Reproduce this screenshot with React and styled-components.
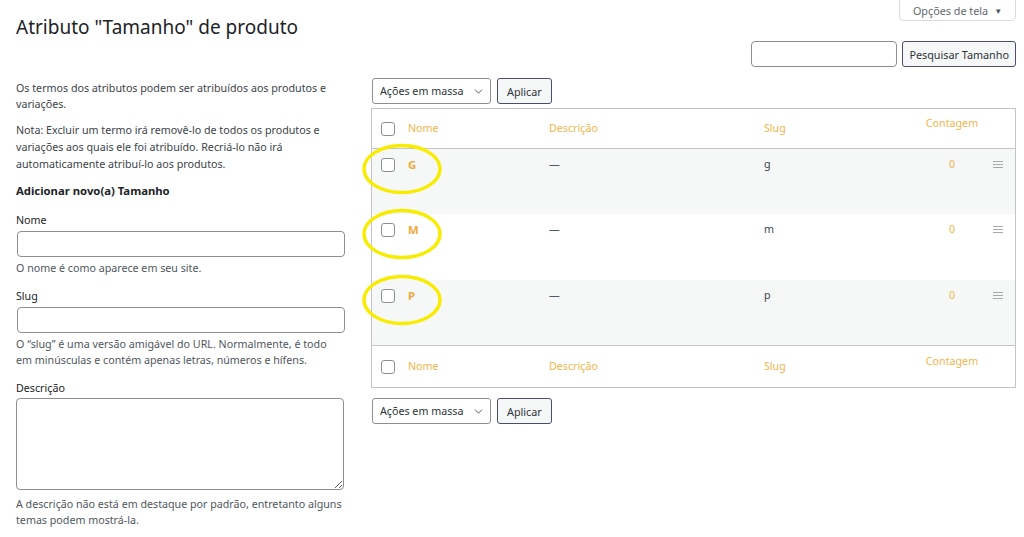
import React from "react";
import styled, { createGlobalStyle } from "styled-components";
import { ChevronDown } from "lucide-react";

const Global = createGlobalStyle`
  html, body { margin: 0; padding: 0; background: #fff; }
  body {
    font-family: "Noto Sans", "Open Sans", sans-serif;
    font-size: 10.7px;
    color: #3c434a;
  }
  * { box-sizing: border-box; }
`;

const Page = styled.div`
  padding: 0 8px 0 16px;
`;

const TopBar = styled.div`
  display: flex;
  justify-content: space-between;
  align-items: flex-start;
`;

const Title = styled.h1`
  margin: 14px 0 0;
  font-size: 19px;
  font-weight: 400;
  line-height: 26px;
  color: #1d2327;
`;

const RightStack = styled.div`
  display: flex;
  flex-direction: column;
  align-items: flex-end;
`;

const ScreenTab = styled.button`
  height: 22px;
  width: 117px;
  margin-top: -1px;
  border: 1px solid #dcdcde;
  border-radius: 0 0 4px 4px;
  background: #fff;
  color: #646970;
  font: inherit;
  font-size: 10.8px;
  display: flex;
  align-items: center;
  justify-content: center;
  gap: 6px;
  padding: 0;
  span { font-size: 8px; color: #50575e; }
`;

const SearchRow = styled.div`
  display: flex;
  gap: 5px;
  margin-top: 20px;
`;

const SearchInput = styled.input`
  width: 146px;
  height: 26px;
  border: 1px solid #8c8f94;
  border-radius: 4px;
  background: #fff;
`;

const DarkButton = styled.button`
  height: 26px;
  padding: 0 ${(p) => (p.$wide ? "6px" : "9px")};
  border: 1px solid #4e4c6a;
  border-radius: 3px;
  background: #f6f7f7;
  color: #2c3338;
  font: inherit;
  font-size: 10.8px;
`;

const Columns = styled.div`
  display: flex;
  gap: 27px;
  margin-top: 11px;
  align-items: flex-start;
`;

const LeftCol = styled.div`
  width: 328px;
  flex: none;
  padding-top: 2px;
`;

const Para = styled.p`
  margin: 0 0 ${(p) => p.$mb || 0}px;
  line-height: ${(p) => p.$lh || 17}px;
`;

const FormTitle = styled.h2`
  margin: 9px 0 0;
  font-size: 11.3px;
  font-weight: 700;
  line-height: 17px;
  color: #1d2327;
`;

const Field = styled.div`
  margin-top: ${(p) => p.$mt}px;
`;

const Label = styled.label`
  display: block;
  line-height: 17px;
  color: #1d2327;
  margin-bottom: 2px;
`;

const TextInput = styled.input`
  display: block;
  width: 328px;
  height: 26px;
  margin-left: 1px;
  border: 1px solid #8c8f94;
  border-radius: 4px;
  background: #fff;
`;

const TextArea = styled.textarea`
  display: block;
  width: 328px;
  height: 92px;
  margin-top: -1px;
  border: 1px solid #8c8f94;
  border-radius: 4px;
  background: #fff;
`;

const Help = styled.p`
  margin: ${(p) => p.$mt || 3}px 0 0;
  line-height: 16.5px;
  color: #50575e;
`;

const RightCol = styled.div`
  flex: 1;
`;

const Toolbar = styled.div`
  display: flex;
  gap: 6px;
  margin-left: 1px;
`;

const BulkSelect = styled.div`
  width: 119px;
  height: 26px;
  border: 1px solid #8c8f94;
  border-radius: 3px;
  background: #fff;
  display: flex;
  align-items: center;
  justify-content: space-between;
  padding: 0 5px 0 7px;
  color: #2c3338;
`;

const Table = styled.div`
  margin: 4px 0 10px;
  border: 1px solid #c3c4c7;
`;

const Row = styled.div`
  position: relative;
  display: grid;
  grid-template-columns: 36px 141px 215px 1fr 82px 22px;
  align-items: ${(p) => (p.$head ? "center" : "start")};
  height: ${(p) => p.$h}px;
  padding-top: ${(p) => (p.$head ? 0 : 7)}px;
  background: ${(p) => (p.$alt ? "#f6f7f7" : "#fff")};
  border-top: ${(p) => (p.$footer ? "1px solid #c3c4c7" : "none")};
  border-bottom: ${(p) => (p.$headerTop ? "1px solid #c3c4c7" : "none")};
`;

const CheckCell = styled.div`
  padding-left: 9px;
  display: flex;
  align-items: center;
  height: 17px;
`;

const Check = styled.span`
  display: block;
  width: 14px;
  height: 14px;
  border: 1px solid #8c8f94;
  border-radius: 3px;
  background: #fff;
`;

const HeadCell = styled.div`
  color: #f4b54c;
  line-height: 17px;
  text-align: ${(p) => (p.$center ? "center" : "left")};
  margin-top: ${(p) => (p.$raise ? -10 : 0)}px;
`;

const NameCell = styled.div`
  color: #f0a93a;
  font-weight: 700;
  font-size: 11.3px;
  line-height: 17px;
`;

const Cell = styled.div`
  line-height: 17px;
  color: ${(p) => p.$color || "#3c434a"};
  text-align: ${(p) => (p.$center ? "center" : "left")};
`;

const Handle = styled.div`
  height: 17px;
  display: flex;
  align-items: center;
`;

const Marker = styled.svg`
  position: absolute;
  left: -11px;
  top: -6px;
  pointer-events: none;
`;

const terms = [
  { name: "G", slug: "g" },
  { name: "M", slug: "m" },
  { name: "P", slug: "p" },
];

function Header({ footer }) {
  return (
    <Row $head $h={footer ? 42 : 40} $footer={footer} $headerTop={!footer}>
      <CheckCell><Check /></CheckCell>
      <HeadCell>Nome</HeadCell>
      <HeadCell>Descrição</HeadCell>
      <HeadCell>Slug</HeadCell>
      <HeadCell $center $raise>Contagem</HeadCell>
      <div />
    </Row>
  );
}

function Actions() {
  return (
    <Toolbar>
      <BulkSelect>
        Ações em massa
        <ChevronDown size={13} strokeWidth={1.6} color="#3c434a" />
      </BulkSelect>
      <DarkButton>Aplicar</DarkButton>
    </Toolbar>
  );
}

export default function App() {
  return (
    <Page>
      <Global />
      <TopBar>
        <Title>Atributo "Tamanho" de produto</Title>
        <RightStack>
          <ScreenTab>
            Opções de tela <span>▼</span>
          </ScreenTab>
          <SearchRow>
            <SearchInput />
            <DarkButton $wide>Pesquisar Tamanho</DarkButton>
          </SearchRow>
        </RightStack>
      </TopBar>

      <Columns>
        <LeftCol>
          <Para $lh={16} $mb={10}>
            Os termos dos atributos podem ser atribuídos aos produtos e variações.
          </Para>
          <Para>
            Nota: Excluir um termo irá removê-lo de todos os produtos e variações
            aos quais ele foi atribuído. Recriá-lo não irá automaticamente
            atribuí-lo aos produtos.
          </Para>
          <FormTitle>Adicionar novo(a) Tamanho</FormTitle>
          <Field $mt={13}>
            <Label>Nome</Label>
            <TextInput />
            <Help>O nome é como aparece em seu site.</Help>
          </Field>
          <Field $mt={11}>
            <Label>Slug</Label>
            <TextInput />
            <Help>
              O “slug” é uma versão amigável do URL. Normalmente, é todo em
              minúsculas e contém apenas letras, números e hífens.
            </Help>
          </Field>
          <Field $mt={11}>
            <Label>Descrição</Label>
            <TextArea />
            <Help $mt={6}>
              A descrição não está em destaque por padrão, entretanto alguns
              temas podem mostrá-la.
            </Help>
          </Field>
        </LeftCol>

        <RightCol>
          <Actions />
          <Table>
            <Header />
            {terms.map((t, i) => (
              <Row key={t.name} $h={i === 1 ? 66 : 65} $alt={i !== 1}>
                <CheckCell><Check /></CheckCell>
                <NameCell>{t.name}</NameCell>
                <Cell $color="#50575e">—</Cell>
                <Cell>{t.slug}</Cell>
                <Cell $center $color="#f4b54c">0</Cell>
                <Handle>
                  <svg width="10" height="7" viewBox="0 0 10 7">
                    <path d="M0 .5h10M0 3.5h10M0 6.5h10" stroke="#a7aaad" strokeWidth="1" />
                  </svg>
                </Handle>
                <Marker width="82" height="52" viewBox="0 0 82 52">
                  <ellipse cx="41" cy="26" rx="38" ry="23.5" fill="none" stroke="#f8ec00" strokeWidth="3.5" />
                </Marker>
              </Row>
            ))}
            <Header footer />
          </Table>
          <Actions />
        </RightCol>
      </Columns>
    </Page>
  );
}
